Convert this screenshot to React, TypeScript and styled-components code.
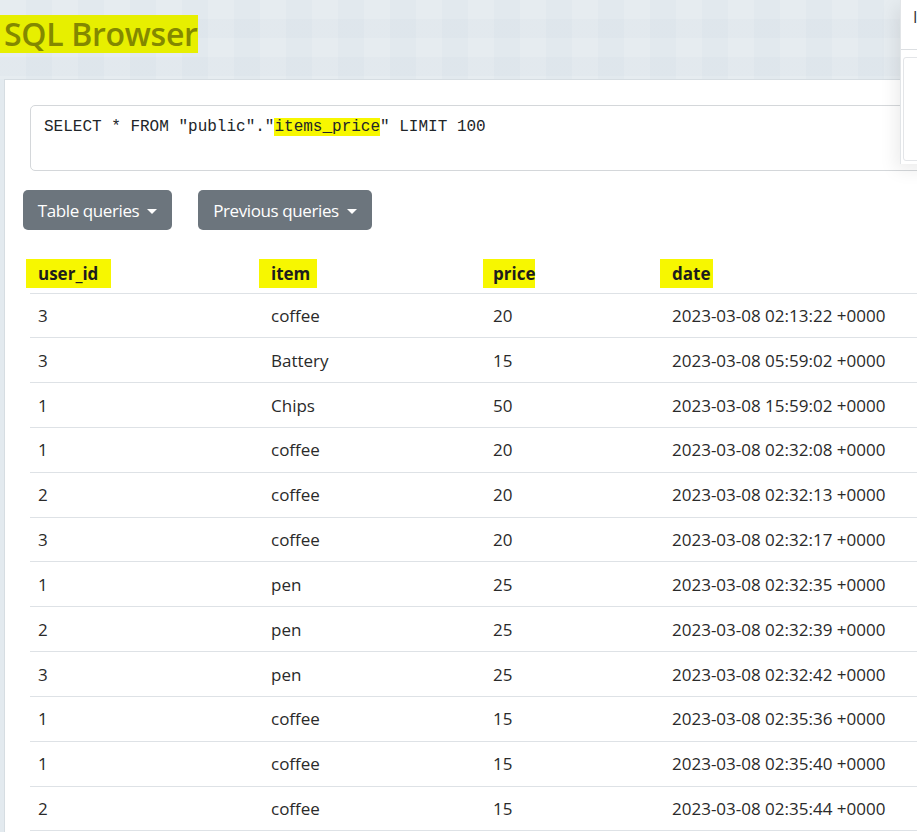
import React from "react";
import styled, { createGlobalStyle } from "styled-components";

const Global = createGlobalStyle`
  html, body { margin: 0; padding: 0; }
  body {
    background: #e3eaef;
    font-family: "Open Sans", "Noto Sans", sans-serif;
    color: #212529;
    overflow: hidden;
    width: 917px;
    height: 832px;
  }
`;

const Page = styled.div`
  position: relative;
  width: 917px;
  height: 832px;
  overflow: hidden;
`;

const Header = styled.header`
  height: 79px;
  box-sizing: border-box;
  padding: 15px 0 0 0;
  background-color: #e2e9ee;
  background-image:
    linear-gradient(90deg, rgba(255,255,255,0.12) 50%, rgba(0,0,0,0) 50%),
    linear-gradient(0deg, rgba(190,205,215,0.10) 50%, rgba(0,0,0,0) 50%);
  background-size: 52px 52px, 38px 38px;
`;

const Title = styled.h1`
  margin: 0;
  display: inline-block;
  font-family: "Open Sans", sans-serif;
  font-weight: 600;
  font-size: 32px;
  line-height: 38px;
  letter-spacing: -0.3px;
  color: #838800;
  background: #e7ef00;
  padding: 0 0 0 4px;
`;

const Card = styled.main`
  margin-left: 4px;
  background: #ffffff;
  border-top: 1px solid #d6dde2;
  border-left: 1px solid #d6dde2;
  padding: 25px 0 0 18px;
  height: 760px;
`;

const QueryBox = styled.div`
  margin-left: 7px;
  width: 900px;
  height: 66px;
  box-sizing: border-box;
  border: 1px solid #d4d7da;
  border-radius: 5px;
  padding: 11px 13px;
  font-family: "Liberation Mono", monospace;
  font-size: 16px;
  line-height: 20px;
  color: #212529;
  white-space: pre;
`;

const Mark = styled.span`
  background: #f7f700;
`;

const Toolbar = styled.div`
  display: flex;
  gap: 26px;
  margin-top: 19px;
`;

const DropButton = styled.button<{ $w: number }>`
  width: ${(p) => p.$w}px;
  height: 40px;
  border: none;
  border-radius: 5px;
  background: #6c757d;
  color: #ffffff;
  font-family: "Open Sans", sans-serif;
  font-size: 17px;
  letter-spacing: -0.4px;
  display: flex;
  align-items: center;
  justify-content: center;
  gap: 8px;
  padding: 0;
`;

const Caret = styled.span`
  width: 0;
  height: 0;
  border-left: 5px solid transparent;
  border-right: 5px solid transparent;
  border-top: 5px solid #ffffff;
  margin-top: 2px;
`;

const Table = styled.table`
  margin: 25px 0 0 7px;
  border-collapse: collapse;
  width: 1000px;
  table-layout: fixed;
`;

const Th = styled.th<{ $w: number }>`
  box-sizing: border-box;
  width: ${(p) => p.$w}px;
  text-align: left;
  padding: 0 8px;
  height: 38px;
  border-bottom: 1px solid #dee2e6;
  font-size: 17px;
  font-weight: 700;
  color: #1d1d1d;
  vertical-align: middle;
`;

const HeadMark = styled.span<{ $l: number; $r: number }>`
  background: #f7f700;
  padding: 3px ${(p) => p.$r}px 3px ${(p) => p.$l}px;
  margin-left: -${(p) => p.$l}px;
`;

const Td = styled.td`
  box-sizing: border-box;
  padding: 0 8px;
  height: 44.83px;
  border-bottom: 1px solid #dee2e6;
  font-size: 17px;
  color: #2a2a2a;
  vertical-align: middle;
  white-space: nowrap;
`;

const SidePanel = styled.aside`
  position: absolute;
  left: 900px;
  top: 0;
  width: 40px;
  height: 164px;
  background: #ffffff;
  border-left: 1px solid #e2e5e8;
  box-shadow: -4px 6px 18px rgba(0, 0, 0, 0.08);
`;

const PanelHead = styled.div`
  height: 50px;
  border-bottom: 1px solid #dcdfe2;
  padding: 10px 0 0 12px;
  box-sizing: border-box;
  font-family: "Open Sans", sans-serif;
  font-size: 16px;
  line-height: 14px;
  color: #333;
`;

const PanelBox = styled.div`
  margin: 7px 0 0 2px;
  height: 104px;
  border: 1px solid #e3e5e8;
  border-radius: 3px;
  box-sizing: border-box;
`;

const rows: [string, string, string, string][] = [
  ["3", "coffee", "20", "2023-03-08 02:13:22 +0000"],
  ["3", "Battery", "15", "2023-03-08 05:59:02 +0000"],
  ["1", "Chips", "50", "2023-03-08 15:59:02 +0000"],
  ["1", "coffee", "20", "2023-03-08 02:32:08 +0000"],
  ["2", "coffee", "20", "2023-03-08 02:32:13 +0000"],
  ["3", "coffee", "20", "2023-03-08 02:32:17 +0000"],
  ["1", "pen", "25", "2023-03-08 02:32:35 +0000"],
  ["2", "pen", "25", "2023-03-08 02:32:39 +0000"],
  ["3", "pen", "25", "2023-03-08 02:32:42 +0000"],
  ["1", "coffee", "15", "2023-03-08 02:35:36 +0000"],
  ["1", "coffee", "15", "2023-03-08 02:35:40 +0000"],
  ["2", "coffee", "15", "2023-03-08 02:35:44 +0000"],
];

const cols: { name: string; w: number; l: number; r: number }[] = [
  { name: "user_id", w: 233, l: 12, r: 13 },
  { name: "item", w: 222, l: 12, r: 7 },
  { name: "price", w: 179, l: 10, r: 0 },
  { name: "date", w: 366, l: 12, r: 3 },
];

export default function App() {
  return (
    <Page>
      <Global />
      <Header>
        <Title>SQL Browser</Title>
      </Header>
      <Card>
        <QueryBox>
          SELECT * FROM "public"."<Mark>items_price</Mark>" LIMIT 100
        </QueryBox>
        <Toolbar>
          <DropButton $w={149}>
            Table queries <Caret />
          </DropButton>
          <DropButton $w={174}>
            Previous queries <Caret />
          </DropButton>
        </Toolbar>
        <Table>
          <thead>
            <tr>
              {cols.map((c) => (
                <Th key={c.name} $w={c.w}>
                  <HeadMark $l={c.l} $r={c.r}>
                    {c.name}
                  </HeadMark>
                </Th>
              ))}
            </tr>
          </thead>
          <tbody>
            {rows.map((r, i) => (
              <tr key={i}>
                {r.map((v, j) => (
                  <Td key={j}>{v}</Td>
                ))}
              </tr>
            ))}
          </tbody>
        </Table>
      </Card>
      <SidePanel>
        <PanelHead>I</PanelHead>
        <PanelBox />
      </SidePanel>
    </Page>
  );
}
